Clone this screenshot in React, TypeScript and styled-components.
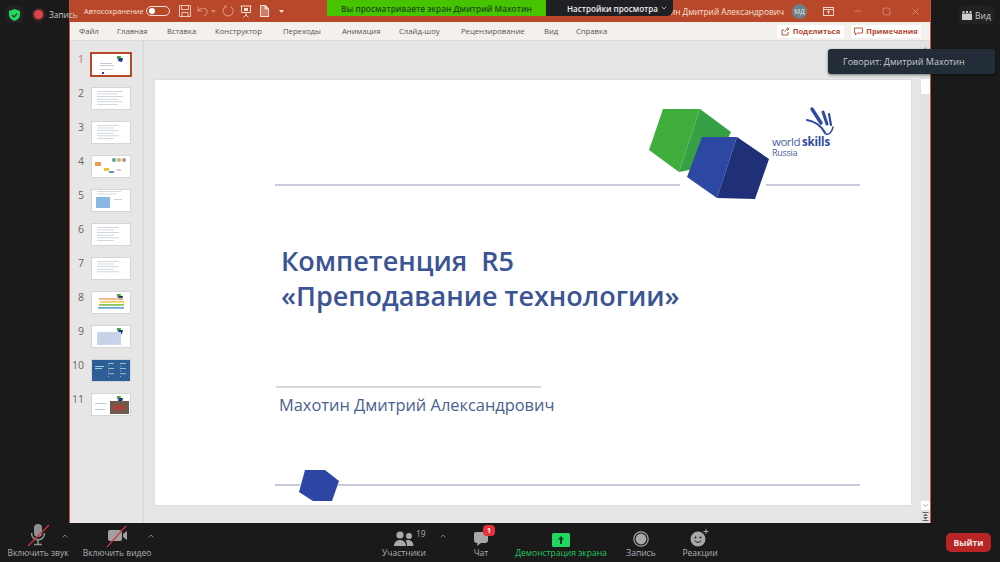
import styled, { createGlobalStyle } from "styled-components";
import { ChevronDown, ChevronUp, Minus, Square, X } from "lucide-react";

const GlobalStyle = createGlobalStyle`
  html, body {
    margin: 0;
    padding: 0;
    background: #1a1a1a;
  }
  * {
    box-sizing: border-box;
  }
`;

const Page = styled.div`
  position: relative;
  width: 1000px;
  height: 562px;
  overflow: hidden;
  display: flex;
  flex-direction: column;
  background: #1a1a1a;
  font-family: "Open Sans", "Liberation Sans", sans-serif;
`;

const Stage = styled.div`
  height: 523px;
  padding-left: 69px;
  padding-right: 69px;
`;

const AppWindow = styled.div`
  height: 100%;
  display: flex;
  flex-direction: column;
  border-left: 1px solid #c4573a;
  border-right: 1px solid #c4573a;
  background: #e6e6e6;
`;

const TitleBar = styled.div`
  height: 22px;
  flex: none;
  display: flex;
  align-items: center;
  padding-left: 14px;
  background: #b9482a;
  color: #f6e0d8;
`;

const AutoSave = styled.span`
  width: 62px;
  flex: none;
  font-size: 7.4px;
  white-space: nowrap;
`;

const Toggle = styled.span`
  width: 24px;
  height: 10px;
  border: 1px solid #f6e0d8;
  border-radius: 5px;
  display: flex;
  align-items: center;
  padding-left: 2px;
  margin-right: 9px;
  &::before {
    content: "";
    width: 6px;
    height: 6px;
    border-radius: 50%;
    background: #fff;
  }
`;

const QuickIcons = styled.div`
  display: flex;
  align-items: center;
  gap: 6px;
  svg {
    display: block;
  }
`;

const UndoGroup = styled.span`
  display: flex;
  align-items: center;
  gap: 2px;
`;

const MenuCaret = styled.span`
  margin-left: 3px;
`;

const TitleRight = styled.div`
  margin-left: auto;
  display: flex;
  align-items: center;
`;

const OwnerName = styled.span`
  font-size: 8.3px;
  white-space: nowrap;
  margin-right: 8px;
`;

const Avatar = styled.span`
  width: 15px;
  height: 15px;
  border-radius: 50%;
  background: #6f7f88;
  color: #e8edef;
  font-size: 6.5px;
  display: flex;
  align-items: center;
  justify-content: center;
  margin-right: 7px;
`;

const WindowButton = styled.span`
  width: 29px;
  display: flex;
  justify-content: center;
  color: #f3d5ca;
`;

const RibbonTabs = styled.div`
  height: 19px;
  flex: none;
  display: flex;
  align-items: center;
  padding-left: 9px;
  background: #f4f0ee;
  border-bottom: 1px solid #dcdad9;
`;

const Tab = styled.span<{ $width: number }>`
  width: ${(p) => p.$width}px;
  flex: none;
  font-size: 7.7px;
  color: #555;
  white-space: nowrap;
`;

const RibbonActions = styled.div`
  margin-left: auto;
  display: flex;
  gap: 7px;
  padding-right: 9px;
`;

const ActionButton = styled.span<{ $width: number }>`
  width: ${(p) => p.$width}px;
  height: 13px;
  background: #fff;
  color: #b04a30;
  font-size: 7.6px;
  font-weight: 700;
  display: flex;
  align-items: center;
  justify-content: center;
  gap: 3px;
  white-space: nowrap;
`;

const Workspace = styled.div`
  flex: 1;
  min-height: 0;
  display: flex;
`;

const ThumbRail = styled.div`
  width: 74px;
  flex: none;
  display: flex;
  flex-direction: column;
  gap: 13px;
  padding-top: 13px;
  border-right: 2px solid #dbdbdb;
`;

const ThumbRow = styled.div`
  height: 21px;
  display: flex;
  align-items: flex-start;
`;

const ThumbNumber = styled.span<{ $active?: boolean }>`
  width: 22px;
  flex: none;
  padding-right: 8px;
  text-align: right;
  font-size: 10.5px;
  line-height: 11px;
  color: ${(p) => (p.$active ? "#c4705a" : "#666")};
`;

const ThumbFrame = styled.span<{ $active?: boolean }>`
  width: 38px;
  height: 21px;
  flex: none;
  display: block;
  background: #fff;
  outline: ${(p) => (p.$active ? "2px solid #b9482a" : "1px solid #d6d6d6")};
  svg {
    display: block;
  }
`;

const SlideArea = styled.div`
  flex: 1;
  min-width: 0;
  padding: 39px 9px 18px 11px;
`;

const Slide = styled.div`
  position: relative;
  height: 425px;
  background: #fff;
  box-shadow: 0 0 2px rgba(0, 0, 0, 0.12);
  padding: 163px 0 0 126px;
`;

const SlideArt = styled.svg`
  position: absolute;
  left: 0;
  top: 0;
`;

const SlideTitle = styled.h1`
  position: relative;
  margin: 0 0 81px;
  font-size: 27px;
  line-height: 35px;
  font-weight: 600;
  color: #3a5494;
  white-space: pre;
`;

const SlideAuthor = styled.p`
  position: relative;
  margin: 0 0 0 -2px;
  font-size: 16.4px;
  line-height: 22px;
  font-weight: 500;
  color: #4a5f90;
`;

const ScrollBar = styled.div`
  width: 10px;
  flex: none;
  display: flex;
  flex-direction: column;
  align-items: center;
  background: #e2e2e2;
  color: #666;
  padding-top: 4px;
`;

const ScrollThumb = styled.span`
  width: 9px;
  height: 15px;
  margin-top: 27px;
  background: #fff;
`;

const ScrollDown = styled.span`
  width: 9px;
  height: 9px;
  margin-top: auto;
  background: #fff;
  display: flex;
  align-items: center;
  justify-content: center;
`;

const ScrollFit = styled.span`
  height: 13px;
  display: flex;
  align-items: center;
  svg {
    display: block;
  }
`;

const ShareNotice = styled.div`
  position: absolute;
  left: 327px;
  top: 0;
  height: 16px;
  display: flex;
  font-size: 8.3px;
  font-weight: 600;
  white-space: nowrap;
`;

const NoticeGreen = styled.span`
  width: 219px;
  background: #47c400;
  color: #1f4d14;
  display: flex;
  align-items: center;
  justify-content: center;
`;

const NoticeDark = styled.span`
  width: 127px;
  background: #1f2024;
  color: #eee;
  border-radius: 0 0 6px 0;
  font-size: 8.1px;
  display: flex;
  align-items: center;
  padding-left: 21px;
  gap: 2px;
`;

const SpeakerTip = styled.div`
  position: absolute;
  left: 828px;
  top: 49px;
  width: 167px;
  height: 25px;
  border-radius: 3px;
  background: #232d38;
  box-shadow: 0 1px 3px rgba(0, 0, 0, 0.5);
  color: #c9ccd0;
  font-size: 9px;
  padding-left: 15px;
  display: flex;
  align-items: center;
`;

const RecordBadge = styled.div`
  position: absolute;
  left: 6px;
  top: 6px;
  display: flex;
  align-items: center;
  color: #c9c9c9;
  font-size: 8.3px;
`;

const ShieldBox = styled.span`
  width: 17px;
  height: 17px;
  border-radius: 4px;
  background: #222;
  display: flex;
  align-items: center;
  justify-content: center;
  margin-right: 11px;
`;

const RecordDot = styled.span`
  width: 9px;
  height: 9px;
  border-radius: 50%;
  background: #d8454a;
  box-shadow: 0 0 3px 1px rgba(238, 75, 80, 0.5);
  margin-right: 6px;
`;

const ViewBadge = styled.div`
  position: absolute;
  left: 959px;
  top: 6px;
  width: 35px;
  height: 18px;
  border-radius: 5px;
  background: #222;
  color: #ccc;
  font-size: 8.5px;
  display: flex;
  align-items: center;
  justify-content: center;
  gap: 3px;
`;

const Toolbar = styled.div`
  flex: 1;
  display: flex;
  align-items: stretch;
`;

const ToolGroup = styled.div<{ $start: number }>`
  display: flex;
  margin-left: ${(p) => p.$start}px;
`;

const ToolItem = styled.div<{ $width: number; $after?: number }>`
  position: relative;
  width: ${(p) => p.$width}px;
  margin-right: ${(p) => p.$after ?? 0}px;
  flex: none;
  display: flex;
  flex-direction: column;
  align-items: center;
`;

const ToolIcon = styled.div`
  height: 24px;
  display: flex;
  align-items: flex-end;
  justify-content: center;
  color: #b0b0b0;
  svg {
    display: block;
  }
`;

const ToolLabel = styled.span<{ $accent?: boolean }>`
  font-size: 8.5px;
  line-height: 11px;
  white-space: nowrap;
  color: ${(p) => (p.$accent ? "#22c55e" : "#a9b0b5")};
`;

const Caret = styled.span<{ $right: number }>`
  position: absolute;
  top: 9px;
  right: ${(p) => p.$right}px;
  display: flex;
  color: #b0b0b0;
`;

const ParticipantCount = styled.span`
  position: absolute;
  left: 42px;
  top: 5px;
  font-size: 8.5px;
  line-height: 11px;
  color: #a9a9a9;
`;

const ChatBadge = styled.span`
  position: absolute;
  left: 27px;
  top: 2px;
  width: 12px;
  height: 11px;
  border-radius: 4px;
  background: #e5323b;
  color: #fff;
  font-size: 7px;
  font-weight: 700;
  display: flex;
  align-items: center;
  justify-content: center;
`;

const LeaveButton = styled.button`
  margin: 10px 9px 10px auto;
  width: 45px;
  height: 19px;
  border: none;
  padding: 0;
  border-radius: 5px;
  background: #b92525;
  color: #f4e6e6;
  font-family: inherit;
  font-size: 8.5px;
  font-weight: 700;
`;

const tabs: [string, number][] = [
  ["Файл", 38],
  ["Главная", 50],
  ["Вставка", 48],
  ["Конструктор", 68],
  ["Переходы", 59],
  ["Анимация", 57],
  ["Слайд-шоу", 62],
  ["Рецензирование", 83],
  ["Вид", 32],
  ["Справка", 50],
];

const MiniLines = ({ x = 5, y = 5, count = 4, w = 24 }: { x?: number; y?: number; count?: number; w?: number }) => (
  <>
    {Array.from({ length: count }, (_, i) => (
      <rect key={i} x={x} y={y + i * 2.6} width={i % 2 ? w - 5 : w} height={0.8} fill="#c6ccd8" />
    ))}
  </>
);

const MiniCubes = () => (
  <>
    <polygon points="25,2 29,2 28,6 25,5" fill="#3fae3f" />
    <polygon points="27,4 31,4 30,8 26,7" fill="#22337f" />
  </>
);

const MiniSlide = ({ n }: { n: number }) => {
  const body = () => {
    switch (n) {
      case 1:
        return (
          <>
            <MiniCubes />
            <rect x="8" y="9" width="12" height="0.8" fill="#b4bcd2" />
            <rect x="8" y="11" width="14" height="0.8" fill="#b4bcd2" />
            <rect x="8" y="15" width="13" height="0.7" fill="#c4c4c4" />
            <polygon points="10,18 12,18 12,20 10,20" fill="#2d45a3" />
          </>
        );
      case 2:
      case 3:
      case 6:
      case 7:
        return <MiniLines count={n === 7 ? 5 : 6} y={3} w={n === 2 ? 26 : 22} />;
      case 4:
        return (
          <>
            <rect x="3" y="6" width="6" height="4" fill="#ee9a4d" />
            <circle cx="22" cy="4" r="2" fill="#5f9e90" />
            <circle cx="27" cy="4" r="2" fill="#c7b16a" />
            <circle cx="32" cy="4" r="2" fill="#b08f8f" />
            <rect x="12" y="12" width="5" height="3" fill="#f2c230" />
            <rect x="17" y="15" width="5" height="2" fill="#5d93c6" />
            <rect x="25" y="13" width="4" height="2" fill="#e6c8d6" />
          </>
        );
      case 5:
        return (
          <>
            <MiniLines y={1} count={2} w={24} />
            <rect x="4" y="7" width="14" height="11" fill="#8ab6e2" />
            <rect x="22" y="9" width="8" height="0.8" fill="#bcc8d4" />
          </>
        );
      case 8:
        return (
          <>
            <MiniCubes />
            <rect x="7" y="6" width="24" height="1.8" fill="#f2b48a" />
            <rect x="8" y="9" width="24" height="1.8" fill="#f2d060" />
            <rect x="7" y="12" width="25" height="1.8" fill="#8fc65c" />
            <rect x="6" y="15" width="26" height="1.8" fill="#6faadb" />
          </>
        );
      case 9:
        return (
          <>
            <MiniCubes />
            <rect x="5" y="6" width="24" height="13" fill="#c9d4ee" />
            <MiniLines x={7} y={8} count={4} w={18} />
          </>
        );
      case 10:
        return (
          <>
            <rect width="38" height="21" fill="#2b5f96" />
            <rect x="3" y="6" width="9" height="1" fill="#a9c6e0" />
            <rect x="3" y="8" width="7" height="1" fill="#a9c6e0" />
            <MiniLines x={16} y={3} count={6} w={6} />
            <MiniLines x={28} y={3} count={6} w={6} />
          </>
        );
      default:
        return (
          <>
            <MiniCubes />
            <rect x="3" y="9" width="11" height="0.8" fill="#b4bcd2" />
            <rect x="3" y="15" width="10" height="0.8" fill="#b4bcd2" />
            <rect x="18" y="7" width="19" height="13" fill="#6d5a4d" />
            <rect x="21" y="11" width="12" height="5" fill="#a5403a" />
          </>
        );
    }
  };
  return (
    <svg width="38" height="21" viewBox="0 0 38 21">
      {body()}
    </svg>
  );
};

const SlideArtwork = () => (
  <SlideArt width="756" height="425" viewBox="155 80 756 425">
    <path d="M275 185H680M766 185H860" stroke="#8f95b8" strokeWidth="1" />
    <path d="M276 387H541" stroke="#b0b0b0" strokeWidth="1" />
    <path d="M275 485H300M338 485H860" stroke="#8f95b8" strokeWidth="1" />
    <polygon points="663,109 700,109 679,172 649,150" fill="#3fae3c" />
    <polygon points="700,109 731,132 715,165 679,172" fill="#36a144" />
    <polygon points="702,137 737,137 717,198 687,177" fill="#2d48a3" />
    <polygon points="737,137 769,159 755,199 717,198" fill="#1f2f78" />
    <polygon points="305,470 325,470 339,481 332,501 313,501 299,492" fill="#2d45a3" />
    <g fill="none" stroke="#2f4aa0" strokeLinecap="round">
      <path d="M812 109L821 123" strokeWidth="3.4" />
      <path d="M823 112L827 124" strokeWidth="3" />
      <path d="M829 114L831 125" strokeWidth="2.2" />
      <path d="M807 120C813 121 821 125 825 133" strokeWidth="2.2" />
      <path d="M826 134C829 135 832 132 833 127" strokeWidth="1.4" />
    </g>
    <text x="772" y="146" fontFamily="Open Sans" fontSize="11.5" letterSpacing="-0.5" fill="#4a629f">
      world
    </text>
    <text x="802" y="146" fontFamily="Open Sans" fontSize="11.5" fontWeight="700" letterSpacing="-0.2" fill="#2f4aa0">
      skills
    </text>
    <text x="772" y="156" fontFamily="Open Sans" fontSize="9" letterSpacing="-0.3" fill="#4a629f">
      Russia
    </text>
  </SlideArt>
);

const MicOff = () => (
  <svg width="26" height="24" viewBox="0 0 26 24">
    <rect x="9" y="1" width="8" height="13" rx="4" fill="#8f8f8f" />
    <path d="M6.5 10c0 9 13 9 13 0M13 17v4M9 21.5h8" stroke="#8f8f8f" strokeWidth="1.6" fill="none" />
    <path d="M3 23L24 2" stroke="#d6333c" strokeWidth="1.2" />
  </svg>
);

const VideoOff = () => (
  <svg width="30" height="24" viewBox="0 0 30 24">
    <rect x="6" y="7" width="14" height="11" rx="2" fill="#a0a0a0" />
    <path d="M21 11l4-3v9l-4-3z" fill="#a0a0a0" />
    <path d="M5 24L24 3" stroke="#d6333c" strokeWidth="1.2" />
  </svg>
);

const People = () => (
  <svg width="20" height="16" viewBox="0 0 20 16" fill="#a8a8a8">
    <circle cx="6" cy="4" r="3.6" />
    <circle cx="15" cy="5" r="3" />
    <path d="M0 15c0-8 12-8 12 0zM13 15c0-3-.6-4.500-1.500-5.500C14 8.200 19.500 9 19.500 15z" />
  </svg>
);

const ChatBubble = () => (
  <svg width="17" height="16" viewBox="0 0 17 16" fill="#a8a8a8">
    <path d="M3 1h9a3 3 0 0 1 3 3v5a3 3 0 0 1-3 3H8l-4 3 .5-3A3.200 3.200 0 0 1 1 9V4a2.500 2.500 0 0 1 2-3z" />
  </svg>
);

const ShareScreen = () => (
  <svg width="18" height="14" viewBox="0 0 18 14">
    <rect width="18" height="14" rx="1.500" fill="#22d65f" />
    <path d="M9 3l3.200 3.600H10V11H8V6.600H5.800z" fill="#123d22" />
  </svg>
);

const RecordRing = () => (
  <svg width="16" height="16" viewBox="0 0 16 16">
    <circle cx="8" cy="8" r="7.200" fill="none" stroke="#a8a8a8" strokeWidth="1.200" />
    <circle cx="8" cy="8" r="5.400" fill="#a8a8a8" />
  </svg>
);

const Reaction = () => (
  <svg width="20" height="18" viewBox="0 0 20 18">
    <circle cx="8" cy="10" r="7.500" fill="#a8a8a8" />
    <circle cx="5.500" cy="8.500" r="1" fill="#1a1a1a" />
    <circle cx="10.500" cy="8.500" r="1" fill="#1a1a1a" />
    <path d="M4.800 11.500c1.500 2.400 5 2.400 6.400 0" stroke="#1a1a1a" fill="none" />
    <path d="M16 0v5M13.500 2.500h5" stroke="#a8a8a8" />
  </svg>
);

const Shield = () => (
  <svg width="11" height="12" viewBox="0 0 11 12">
    <path d="M5.500 0L11 2v4c0 3-2.500 5-5.500 6C2.500 11 0 9 0 6V2z" fill="#22d65f" />
    <path d="M3 6l2 2 3.200-3.400" stroke="#123d22" strokeWidth="1.200" fill="none" />
  </svg>
);

const SaveGlyph = () => (
  <svg width="12" height="12" viewBox="0 0 12 12" fill="none" stroke="#eec4b6">
    <path d="M.5.500h11v11H.5z" />
    <path d="M2.500.500v4h7v-4M3 11.500V7.500h6v4" />
  </svg>
);

const UndoGlyph = () => (
  <svg width="12" height="12" viewBox="0 0 12 12" fill="none" stroke="#d98b74" strokeWidth="1.100">
    <path d="M1 1.500V6h4.500M1.500 5.500C3.500 2.500 9 2.500 10 6c.5 2-.5 4-3 5" />
  </svg>
);

const SmallCaret = ({ color }: { color: string }) => (
  <svg width="5" height="3" viewBox="0 0 5 3" fill={color}>
    <path d="M0 0h5L2.500 3z" />
  </svg>
);

const RedoGlyph = () => (
  <svg width="12" height="12" viewBox="0 0 12 12" fill="none" stroke="#d98b74" strokeWidth="1.100">
    <path d="M8.500 1.500A5 5 0 1 1 3 2" />
    <path d="M2 1h2v2" />
  </svg>
);

const Present = () => (
  <svg width="12" height="13" viewBox="0 0 12 13" fill="none" stroke="#f6e0d8">
    <path d="M.5 1h11M1.500 1v6.500h9V1M6 7.500V10M3.500 12.500L6 10l2.500 2.500" />
    <rect x="4" y="3" width="4" height="3" fill="#f6e0d8" stroke="none" />
  </svg>
);

const DocGlyph = () => (
  <svg width="12" height="12" viewBox="0 0 12 12" fill="#f6e0d8">
    <path d="M2 0h5.500L11 3.500V12H2zM3 1v10h7V4.500H6.500V1z" />
    <path d="M3 1h3.500v3.500H10V11H3z" opacity="0.35" />
  </svg>
);

const RibbonDisplay = () => (
  <svg width="11" height="9" viewBox="0 0 11 9" fill="none" stroke="currentColor">
    <rect x="0.500" y="0.500" width="10" height="8" />
    <path d="M0.500 2.500h10M5.500 7V4M4 5.200l1.500-1.500L7 5.200" />
  </svg>
);

const ShareGlyph = () => (
  <svg width="9" height="9" viewBox="0 0 9 9" fill="none" stroke="currentColor" strokeWidth="0.9">
    <path d="M7 5v3H1V3h2M4 5c0-2 1.500-3 3.500-3M6 .5l2 1.500L6 3.500" />
  </svg>
);

const CommentGlyph = () => (
  <svg width="9" height="9" viewBox="0 0 9 9" fill="none" stroke="currentColor" strokeWidth="0.9">
    <path d="M.5 1h8v5H3.500L1.500 8V6h-1z" />
  </svg>
);

const ViewGlyph = () => (
  <svg width="10" height="9" viewBox="0 0 10 9" fill="#ccc">
    <rect y="2.500" width="10" height="6.500" rx="0.500" />
    <rect x="0.500" y="0" width="2" height="2" />
    <rect x="4" y="0" width="2" height="2" />
    <rect x="7.500" y="0" width="2" height="2" />
  </svg>
);

const FitGlyph = () => (
  <svg width="7" height="9" viewBox="0 0 7 9" fill="#666">
    <path d="M.5 0h6v1h-6zM.5 8h6v1h-6zM3.500 1.500L6 4H1zM1 5h5L3.500 7.500z" />
  </svg>
);

export default function App() {
  return (
    <Page>
      <GlobalStyle />
      <Stage>
        <AppWindow>
          <TitleBar>
            <AutoSave>Автосохранение</AutoSave>
            <Toggle />
            <QuickIcons>
              <SaveGlyph />
              <UndoGroup>
                <UndoGlyph />
                <SmallCaret color="#d98b74" />
              </UndoGroup>
              <RedoGlyph />
              <Present />
              <DocGlyph />
              <MenuCaret>
                <SmallCaret color="#f6e0d8" />
              </MenuCaret>
            </QuickIcons>
            <TitleRight>
              <OwnerName>Махотин Дмитрий Александрович</OwnerName>
              <Avatar>МД</Avatar>
              <WindowButton>
                <RibbonDisplay />
              </WindowButton>
              <WindowButton>
                <Minus size={10} strokeWidth={1} />
              </WindowButton>
              <WindowButton>
                <Square size={9} strokeWidth={1} />
              </WindowButton>
              <WindowButton>
                <X size={11} strokeWidth={1} />
              </WindowButton>
            </TitleRight>
          </TitleBar>
          <RibbonTabs>
            {tabs.map(([name, width]) => (
              <Tab key={name} $width={width}>
                {name}
              </Tab>
            ))}
            <RibbonActions>
              <ActionButton $width={67}>
                <ShareGlyph />
                Поделиться
              </ActionButton>
              <ActionButton $width={70}>
                <CommentGlyph />
                Примечания
              </ActionButton>
            </RibbonActions>
          </RibbonTabs>
          <Workspace>
            <ThumbRail>
              {Array.from({ length: 11 }, (_, i) => (
                <ThumbRow key={i}>
                  <ThumbNumber $active={i === 0}>{i + 1}</ThumbNumber>
                  <ThumbFrame $active={i === 0}>
                    <MiniSlide n={i + 1} />
                  </ThumbFrame>
                </ThumbRow>
              ))}
            </ThumbRail>
            <SlideArea>
              <Slide>
                <SlideArtwork />
                <SlideTitle>{"Компетенция  R5\n«Преподавание технологии»"}</SlideTitle>
                <SlideAuthor>Махотин Дмитрий Александрович</SlideAuthor>
              </Slide>
            </SlideArea>
            <ScrollBar>
              <ChevronUp size={7} />
              <ScrollThumb />
              <ScrollDown>
                <ChevronDown size={7} />
              </ScrollDown>
              <ScrollFit>
                <FitGlyph />
              </ScrollFit>
            </ScrollBar>
          </Workspace>
        </AppWindow>
      </Stage>
      <Toolbar>
        <ToolGroup $start={0}>
          <ToolItem $width={76}>
            <ToolIcon>
              <MicOff />
            </ToolIcon>
            <ToolLabel>Включить звук</ToolLabel>
            <Caret $right={7}>
              <ChevronUp size={8} />
            </Caret>
          </ToolItem>
          <ToolItem $width={82}>
            <ToolIcon>
              <VideoOff />
            </ToolIcon>
            <ToolLabel>Включить видео</ToolLabel>
            <Caret $right={3}>
              <ChevronUp size={8} />
            </Caret>
          </ToolItem>
        </ToolGroup>
        <ToolGroup $start={216}>
          <ToolItem $width={60} $after={22}>
            <ToolIcon>
              <People />
            </ToolIcon>
            <ParticipantCount>19</ParticipantCount>
            <ToolLabel>Участники</ToolLabel>
            <Caret $right={-13}>
              <ChevronUp size={8} />
            </Caret>
          </ToolItem>
          <ToolItem $width={50}>
            <ToolIcon>
              <ChatBubble />
            </ToolIcon>
            <ToolLabel>Чат</ToolLabel>
            <ChatBadge>1</ChatBadge>
          </ToolItem>
          <ToolItem $width={110}>
            <ToolIcon>
              <ShareScreen />
            </ToolIcon>
            <ToolLabel $accent>Демонстрация экрана</ToolLabel>
          </ToolItem>
          <ToolItem $width={50}>
            <ToolIcon>
              <RecordRing />
            </ToolIcon>
            <ToolLabel>Запись</ToolLabel>
          </ToolItem>
          <ToolItem $width={68}>
            <ToolIcon>
              <Reaction />
            </ToolIcon>
            <ToolLabel>Реакции</ToolLabel>
          </ToolItem>
        </ToolGroup>
        <LeaveButton>Выйти</LeaveButton>
      </Toolbar>
      <RecordBadge>
        <ShieldBox>
          <Shield />
        </ShieldBox>
        <RecordDot />
        Запись
      </RecordBadge>
      <ViewBadge>
        <ViewGlyph />
        Вид
      </ViewBadge>
      <ShareNotice>
        <NoticeGreen>Вы просматриваете экран Дмитрий Махотин</NoticeGreen>
        <NoticeDark>
          Настройки просмотра
          <ChevronDown size={8} />
        </NoticeDark>
      </ShareNotice>
      <SpeakerTip>Говорит: Дмитрий Махотин</SpeakerTip>
    </Page>
  );
}
